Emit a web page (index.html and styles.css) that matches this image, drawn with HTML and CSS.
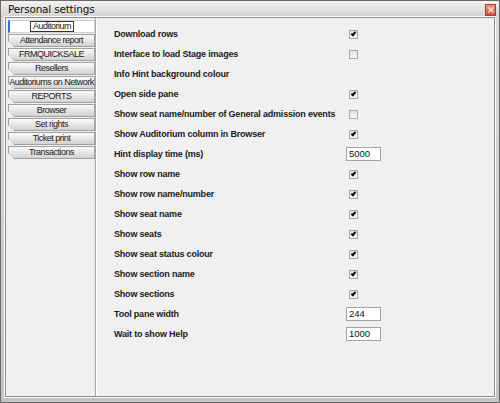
FILE: index.html
```html
<!DOCTYPE html>
<html lang="en">
<head>
    <meta charset="UTF-8">
    <title>Personal settings</title>
    <link rel="stylesheet" href="styles.css">
</head>
<body>
    <div class="window">
        <div class="titlebar">
            <span class="title">Personal settings</span>
            <span class="close"><svg width="6" height="6" viewBox="0 0 6 6"><path d="M0.5 0.5L5.5 5.5M5.5 0.5L0.5 5.5" stroke="#fbe3de" stroke-width="1.4"/></svg></span>
        </div>
        <div class="client">
            <div class="tabs">
                <div class="tab active"><span class="focus">Auditorium</span></div>
                <div class="tab">Attendance report</div>
                <div class="tab">FRMQUICKSALE</div>
                <div class="tab">Resellers</div>
                <div class="tab">Auditoriums on Network</div>
                <div class="tab">REPORTS</div>
                <div class="tab">Browser</div>
                <div class="tab">Set rights</div>
                <div class="tab">Ticket print</div>
                <div class="tab">Transactions</div>
            </div>
            <div class="content">
                <div class="row"><span class="label">Download rows</span><span class="check on"></span></div>
                <div class="row"><span class="label">Interface to load Stage images</span><span class="check"></span></div>
                <div class="row"><span class="label">Info Hint background colour</span></div>
                <div class="row"><span class="label">Open side pane</span><span class="check on"></span></div>
                <div class="row"><span class="label">Show seat name/number of General admission events</span><span class="check"></span></div>
                <div class="row"><span class="label">Show Auditorium column in Browser</span><span class="check on"></span></div>
                <div class="row"><span class="label">Hint display time (ms)</span><span class="edit">5000</span></div>
                <div class="row"><span class="label">Show row name</span><span class="check on"></span></div>
                <div class="row"><span class="label">Show row name/number</span><span class="check on"></span></div>
                <div class="row"><span class="label">Show seat name</span><span class="check on"></span></div>
                <div class="row"><span class="label">Show seats</span><span class="check on"></span></div>
                <div class="row"><span class="label">Show seat status colour</span><span class="check on"></span></div>
                <div class="row"><span class="label">Show section name</span><span class="check on"></span></div>
                <div class="row"><span class="label">Show sections</span><span class="check on"></span></div>
                <div class="row"><span class="label">Tool pane width</span><span class="edit">244</span></div>
                <div class="row"><span class="label">Wait to show Help</span><span class="edit">1000</span></div>
            </div>
        </div>
    </div>
</body>
</html>
```
FILE: styles.css
```css
body {
    margin: 0;
    font-family: "Liberation Sans", sans-serif;
    background-color: #ffffff;
}

.window {
    width: 500px;
    height: 403px;
    box-sizing: border-box;
    border: 1px solid #6a6a6a;
    background: linear-gradient(#dcdcdc, #c4c4c4);
    padding: 0 4px 5px 4px;
    display: flex;
    flex-direction: column;
}

.titlebar {
    height: 16px;
    display: flex;
    align-items: center;
    justify-content: space-between;
    background: linear-gradient(#f2f2f2, #d2d2d2);
    margin: 0 -4px;
    padding: 0 3px 0 7px;
}

.title {
    font-family: "DejaVu Sans", sans-serif;
    font-size: 10.5px;
    letter-spacing: -0.2px;
    color: #111;
}

.close {
    width: 9px;
    height: 10px;
    margin-top: 1px;
    background: linear-gradient(#ef9a88, #d0533c);
    border: 1px solid #a8402e;
    display: flex;
    align-items: center;
    justify-content: center;
}

.client {
    flex: 1;
    display: flex;
    border: 1px solid #8c8c8c;
    background-color: #f0f0f0;
    box-shadow: 0 0 0 1px #ffffff;
}

.tabs {
    width: 87px;
    padding: 2px 0 0 2px;
    border-right: 1px solid #a8a8a8;
    box-shadow: 1px 0 0 #ffffff;
}

.tab {
    height: 11px;
    margin-bottom: 1px;
    border: 1px solid #a0a0a0;
    background: linear-gradient(#fafafa, #d2d2d2);
    font-size: 9px;
    letter-spacing: -0.5px;
    color: #1a1a1a;
    text-align: center;
    line-height: 11px;
    white-space: nowrap;
    overflow: hidden;
    clip-path: polygon(0 0, 100% 0, 100% 100%, 6px 100%, 0 55%);
}

.tab.active {
    background: #ffffff;
    border-color: #d0d0d0 #d0d0d0 #d0d0d0 #2f6fd0;
    border-left-width: 2px;
    clip-path: none;
}

.focus {
    border: 1px solid #333;
    padding: 0 2px;
    line-height: 9px;
    display: inline-block;
}

.content {
    flex: 1;
    padding: 6px 0 0 18px;
}

.row {
    height: 20px;
    display: flex;
    align-items: center;
}

.label {
    width: 232px;
    font-size: 9px;
    font-weight: bold;
    color: #1a1a1a;
    letter-spacing: -0.2px;
    white-space: nowrap;
}

.check {
    width: 7px;
    height: 7px;
    margin-left: 3px;
    border: 1px solid #a9a9a9;
    background: linear-gradient(#e2e2e2, #fafafa);
    position: relative;
}

.check.on::after {
    content: "";
    position: absolute;
    left: 2px;
    top: 0;
    width: 1px;
    height: 3px;
    border: solid #111;
    border-width: 0 2px 2px 0;
    transform: rotate(40deg);
}

.edit {
    width: 29px;
    height: 12px;
    border: 1px solid #a4a4a4;
    background: #ffffff;
    font-size: 9.5px;
    line-height: 12px;
    padding: 0 2px;
    color: #111;
}
```
